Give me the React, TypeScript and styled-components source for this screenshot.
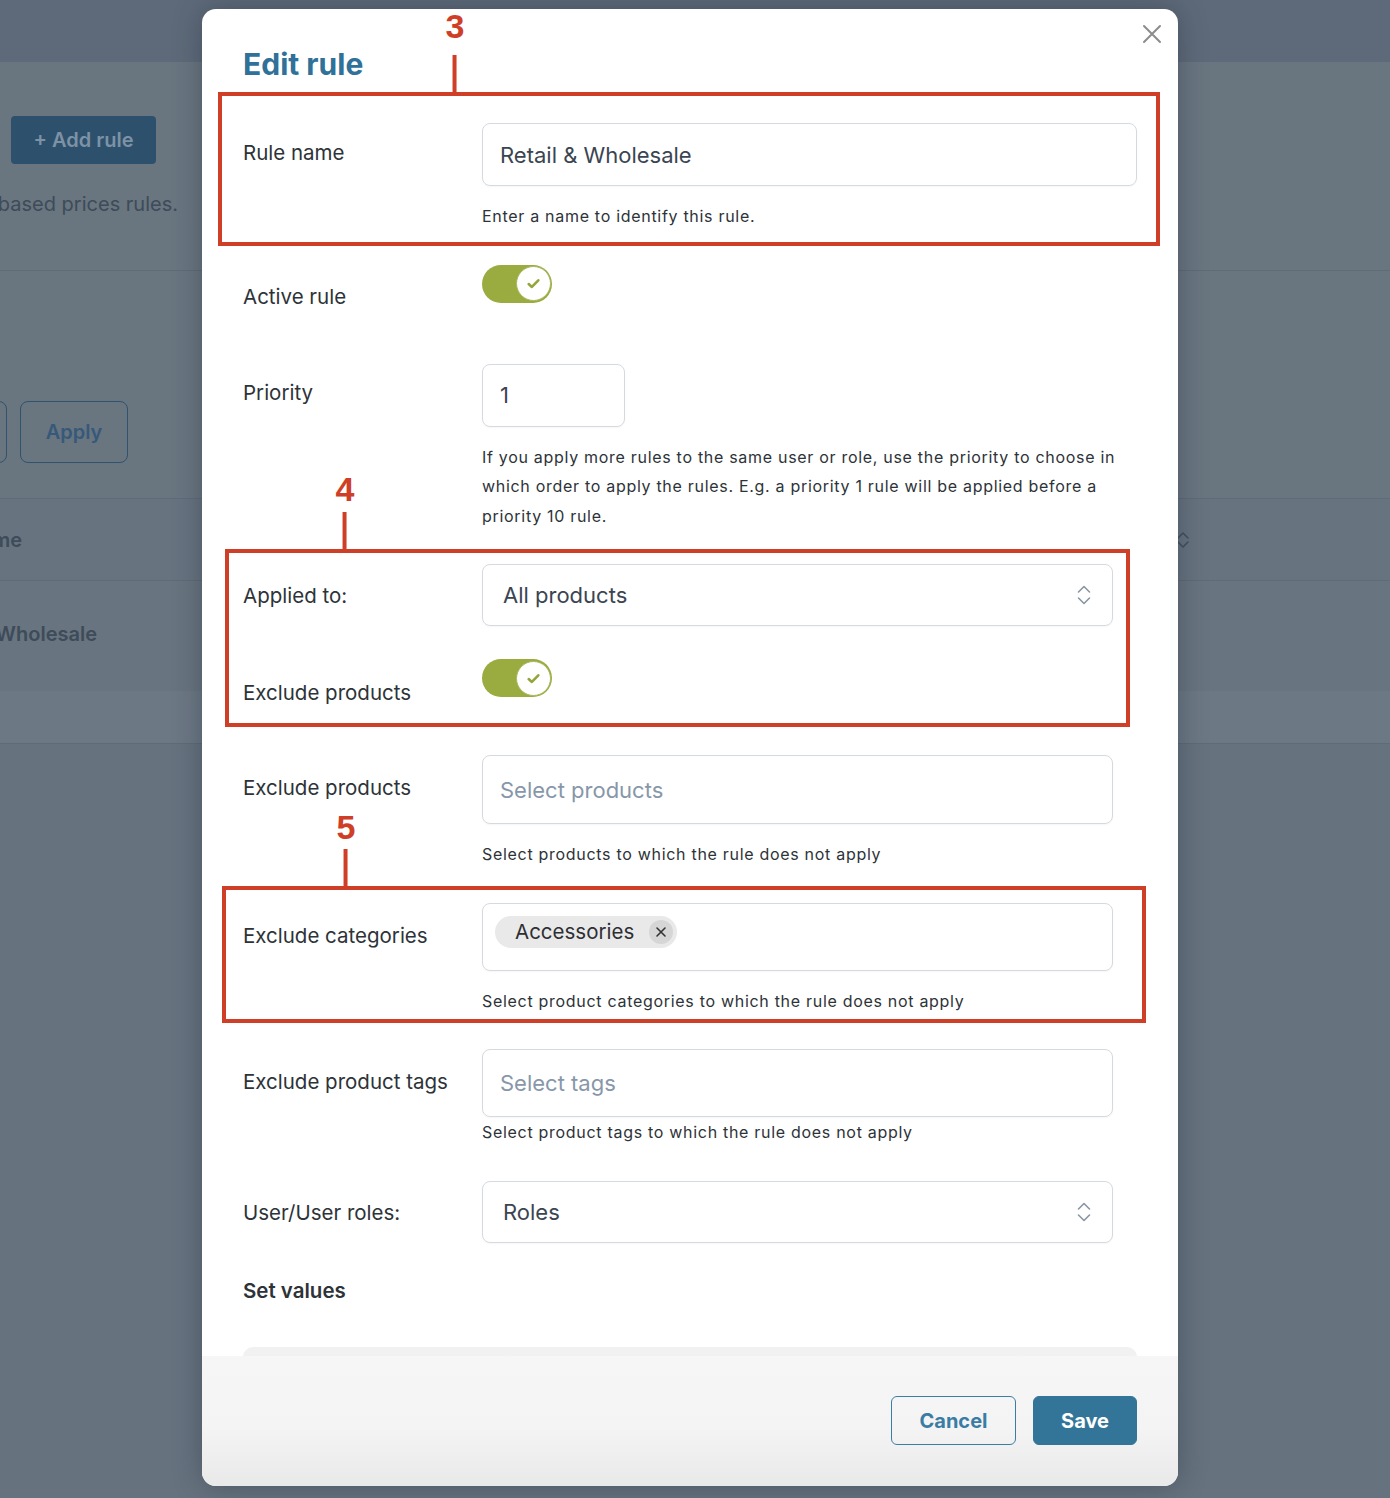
import React from "react"
import styled, { createGlobalStyle } from "styled-components"

const GlobalStyle = createGlobalStyle`
  html, body {
    margin: 0;
    padding: 0;
  }
  body {
    font-family: Inter, "Noto Sans", sans-serif;
    background: #66727e;
  }
  * {
    box-sizing: border-box;
  }
`

const Page = styled.div`
  position: relative;
  width: 1390px;
  height: 1498px;
  overflow: hidden;
  display: flex;
  flex-direction: column;
  background: #66727e;
  color: #3d4a58;
`

/* ---------- dimmed page behind the dialog ---------- */

const TopBar = styled.div`
  height: 62px;
  background: #5e6a79;
`

const Intro = styled.section`
  height: 209px;
  background: #69757f;
  border-bottom: 1px solid #5f6b78;
  padding: 54px 0 0 11px;
  display: flex;
  flex-direction: column;
`

const GhostPrimary = styled.div`
  width: 145px;
  height: 48px;
  border-radius: 4px;
  background: #2d516c;
  color: #7d92a5;
  font-size: 20px;
  font-weight: 600;
  display: flex;
  align-items: center;
  justify-content: center;
`

const Clip = styled.div<{ $w: number; $bold?: boolean }>`
  width: ${(p) => p.$w}px;
  overflow: hidden;
  display: flex;
  justify-content: flex-end;
  white-space: nowrap;
  font-size: 20px;
  font-weight: ${(p) => (p.$bold ? 600 : 400)};
  color: #3e4b59;
`

const Filters = styled.section`
  height: 228px;
  background: #69757f;
  border-bottom: 1px solid #5f6b78;
  display: flex;
  align-items: flex-start;
  gap: 13px;
  padding-top: 130px;
`

const GhostButton = styled.div<{ $w: number; $pull?: number }>`
  width: ${(p) => p.$w}px;
  margin-left: ${(p) => p.$pull || 0}px;
  height: 62px;
  border: 1.5px solid #30536f;
  border-radius: 8px;
  color: #36597a;
  font-size: 20px;
  font-weight: 600;
  display: flex;
  align-items: center;
  justify-content: center;
`

const TableHead = styled.div`
  height: 82px;
  background: #67737f;
  border-bottom: 1px solid #5f6b78;
  display: flex;
  align-items: center;
`

const SortIcon = styled.svg`
  margin-left: auto;
  margin-right: 200px;
`

const TableRow = styled.div`
  height: 110px;
  background: #68747f;
  display: flex;
  align-items: center;
  padding-bottom: 4px;
`

const TableFoot = styled.div`
  height: 53px;
  background: #6c7884;
  border-bottom: 1px solid #5f6b78;
`

/* ---------- dialog ---------- */

const Dialog = styled.div`
  position: absolute;
  left: 202px;
  top: 9px;
  width: 976px;
  height: 1477px;
  background: #fff;
  border-radius: 14px;
  overflow: hidden;
  display: flex;
  flex-direction: column;
  box-shadow: 0 0 28px rgba(40, 52, 66, 0.45);
`

const Body = styled.div`
  position: relative;
  height: 1347px;
  overflow: hidden;
  padding: 37px 41px 0 41px;
`

const Title = styled.h2`
  margin: 0 0 41px 0;
  font-size: 30px;
  line-height: 36px;
  font-weight: 700;
  color: #2f7198;
`

const Close = styled.svg`
  position: absolute;
  top: 15px;
  right: 16px;
`

const Form = styled.div`
  display: flex;
  flex-direction: column;
  gap: 33px;
`

const Row = styled.div<{ $minH?: number }>`
  display: grid;
  grid-template-columns: 239px 1fr;
  min-height: ${(p) => p.$minH || 0}px;
`

const Label = styled.div<{ $pad: number }>`
  padding-top: ${(p) => p.$pad}px;
  font-size: 20.5px;
  line-height: 24px;
  color: #2d3338;
`

const Control = styled.div`
  display: flex;
  flex-direction: column;
`

const Field = styled.div<{ $w?: number; $h: number; $pl?: number; $muted?: boolean }>`
  width: ${(p) => (p.$w ? `${p.$w}px` : "100%")};
  height: ${(p) => p.$h}px;
  border: 1px solid #d4dae0;
  border-radius: 8px;
  box-shadow: 0 1px 2px rgba(0, 0, 0, 0.04);
  padding: 0 21px 0 ${(p) => p.$pl ?? 17}px;
  display: flex;
  align-items: center;
  font-size: 22px;
  color: ${(p) => (p.$muted ? "#8797a9" : "#3b4552")};
`

const Chevrons = styled.svg`
  margin-left: auto;
`

const Helper = styled.div<{ $mt?: number }>`
  max-width: 640px;
  margin-top: ${(p) => p.$mt ?? 16}px;
  font-size: 16px;
  line-height: 29.5px;
  letter-spacing: 0.7px;
  color: #2d3338;
`

const Toggle = styled.div`
  width: 70px;
  height: 38px;
  border-radius: 19px;
  background: #9aab3f;
  display: flex;
  align-items: center;
  justify-content: flex-end;
  padding-right: 1px;
`

const Knob = styled.div`
  width: 35px;
  height: 35px;
  border-radius: 50%;
  background: #fff;
  border: 1px solid #a9b85c;
  display: flex;
  align-items: center;
  justify-content: center;
`

const Chip = styled.div`
  align-self: flex-start;
  margin: 12px 0 0 -5px;
  height: 32px;
  border-radius: 16px;
  background: #e9e9e9;
  padding: 0 4px 0 20px;
  display: flex;
  align-items: center;
  gap: 15px;
  font-size: 20.5px;
  color: #2d2f33;
`

const ChipClose = styled.div`
  width: 24px;
  height: 24px;
  border-radius: 50%;
  background: #d6d6d6;
  display: flex;
  align-items: center;
  justify-content: center;
`

const Section = styled.div`
  margin-top: 36px;
  font-size: 20.5px;
  line-height: 24px;
  font-weight: 600;
  color: #2d3338;
`

const Card = styled.div`
  margin-top: 44px;
  height: 200px;
  border-radius: 10px;
  background: #f1f1f1;
`

const Footer = styled.div`
  flex: 1;
  display: flex;
  justify-content: flex-end;
  align-items: flex-start;
  gap: 17px;
  padding: 40px 41px 0 0;
  background: linear-gradient(#f6f6f6 0%, #f4f4f4 55%, #e9e9e9 100%);
`

const Button = styled.button<{ $primary?: boolean; $w: number }>`
  width: ${(p) => p.$w}px;
  height: 49px;
  border-radius: 6px;
  font-family: inherit;
  font-size: 20px;
  font-weight: 700;
  border: 1px solid ${(p) => (p.$primary ? "#337599" : "#3b7ea4")};
  background: ${(p) => (p.$primary ? "#337599" : "transparent")};
  color: ${(p) => (p.$primary ? "#fff" : "#3b7ca5")};
`

/* ---------- red annotations ---------- */

const RED = "#cf3f27"

const Box = styled.div<{ $x: number; $y: number; $w: number; $h: number }>`
  position: absolute;
  left: ${(p) => p.$x}px;
  top: ${(p) => p.$y}px;
  width: ${(p) => p.$w}px;
  height: ${(p) => p.$h}px;
  border: 4px solid ${RED};
  pointer-events: none;
`

const Marker = styled.div<{ $x: number; $y: number; $gap: number }>`
  position: absolute;
  left: ${(p) => p.$x}px;
  top: ${(p) => p.$y}px;
  transform: translate(-50%, -100%);
  display: flex;
  flex-direction: column;
  align-items: center;
  gap: ${(p) => p.$gap}px;
`

const MarkerNum = styled.div`
  font-family: "Liberation Sans", Arial, sans-serif;
  font-size: 34px;
  line-height: 28px;
  font-weight: 700;
  color: ${RED};
`

const Stem = styled.div`
  width: 4px;
  height: 37px;
  background: ${RED};
`

function UpDown() {
  return (
    <Chevrons width="14" height="24" viewBox="0 0 14 24" fill="none" stroke="#8996a4" strokeWidth="1.6" strokeLinecap="round" strokeLinejoin="round">
      <path d="M1.5 9 L7 3.5 L12.5 9" />
      <path d="M1.5 15 L7 20.5 L12.5 15" />
    </Chevrons>
  )
}

function Switch() {
  return (
    <Toggle>
      <Knob>
        <svg width="15" height="15" viewBox="0 0 14 14" fill="none" stroke="#94a63a" strokeWidth="2.4" strokeLinecap="round" strokeLinejoin="round">
          <path d="M2.5 7.5 L5.5 10.2 L11.5 4" />
        </svg>
      </Knob>
    </Toggle>
  )
}

export default function App() {
  return (
    <Page>
      <GlobalStyle />
      <TopBar />
      <Intro>
        <GhostPrimary>+ Add rule</GhostPrimary>
        <div style={{ marginLeft: -11, marginTop: 28 }}>
          <Clip $w={178}>Create and manage user role based prices rules.</Clip>
        </div>
      </Intro>
      <Filters>
        <GhostButton $w={120} $pull={-113} />
        <GhostButton $w={108}>Apply</GhostButton>
      </Filters>
      <TableHead>
        <Clip $w={22} $bold>
          Name
        </Clip>
        <SortIcon width="14" height="20" viewBox="0 0 14 20" fill="none" stroke="#434f5c" strokeWidth="1.6" strokeLinecap="round" strokeLinejoin="round">
          <path d="M2 8 L7 3 L12 8" />
          <path d="M2 12 L7 17 L12 12" />
        </SortIcon>
      </TableHead>
      <TableRow>
        <Clip $w={97} $bold>
          Retail &amp; Wholesale
        </Clip>
      </TableRow>
      <TableFoot />

      <Dialog>
        <Body>
          <Close width="20" height="20" viewBox="0 0 20 20" fill="none" stroke="#8c8c8c" strokeWidth="2" strokeLinecap="round">
            <path d="M2 2 L18 18 M18 2 L2 18" />
          </Close>
          <Title>Edit rule</Title>
          <Form>
            <Row>
              <Label $pad={18}>Rule name</Label>
              <Control>
                <Field $h={63}>Retail &amp; Wholesale</Field>
                <Helper>Enter a name to identify this rule.</Helper>
              </Control>
            </Row>
            <Row $minH={66}>
              <Label $pad={20}>Active rule</Label>
              <Control>
                <Switch />
              </Control>
            </Row>
            <Row>
              <Label $pad={17}>Priority</Label>
              <Control>
                <Field $w={143} $h={63}>
                  1
                </Field>
                <Helper>
                  If you apply more rules to the same user or role, use the priority to choose in which order to apply the rules. E.g. a
                  priority 1 rule will be applied before a priority 10 rule.
                </Helper>
              </Control>
            </Row>
            <Row>
              <Label $pad={20}>Applied to:</Label>
              <Control>
                <Field $w={631} $h={62} $pl={20}>
                  All products
                  <UpDown />
                </Field>
              </Control>
            </Row>
            <Row $minH={63}>
              <Label $pad={22}>Exclude products</Label>
              <Control>
                <Switch />
              </Control>
            </Row>
            <Row>
              <Label $pad={21}>Exclude products</Label>
              <Control>
                <Field $w={631} $h={69} $muted>
                  Select products
                </Field>
                <Helper>Select products to which the rule does not apply</Helper>
              </Control>
            </Row>
            <Row>
              <Label $pad={21}>Exclude categories</Label>
              <Control>
                <Field $w={631} $h={68}>
                  <Chip>
                    Accessories
                    <ChipClose>
                      <svg width="12" height="12" viewBox="0 0 12 12" fill="none" stroke="#333" strokeWidth="1.6" strokeLinecap="round">
                        <path d="M2 2 L10 10 M10 2 L2 10" />
                      </svg>
                    </ChipClose>
                  </Chip>
                </Field>
                <Helper>Select product categories to which the rule does not apply</Helper>
              </Control>
            </Row>
            <Row>
              <Label $pad={21}>Exclude product tags</Label>
              <Control>
                <Field $w={631} $h={68} $muted>
                  Select tags
                </Field>
                <Helper $mt={1}>Select product tags to which the rule does not apply</Helper>
              </Control>
            </Row>
            <Row>
              <Label $pad={20}>User/User roles:</Label>
              <Control>
                <Field $w={631} $h={62} $pl={20}>
                  Roles
                  <UpDown />
                </Field>
              </Control>
            </Row>
          </Form>
          <Section>Set values</Section>
          <Card />

          <Box $x={16} $y={83} $w={942} $h={154} />
          <Marker $x={253} $y={83} $gap={15}>
            <MarkerNum>3</MarkerNum>
            <Stem />
          </Marker>
          <Box $x={23} $y={540} $w={905} $h={178} />
          <Marker $x={143} $y={540} $gap={9}>
            <MarkerNum>4</MarkerNum>
            <Stem />
          </Marker>
          <Box $x={20} $y={877} $w={924} $h={137} />
          <Marker $x={144} $y={877} $gap={8}>
            <MarkerNum>5</MarkerNum>
            <Stem />
          </Marker>
        </Body>
        <Footer>
          <Button $w={125}>Cancel</Button>
          <Button $w={104} $primary>
            Save
          </Button>
        </Footer>
      </Dialog>
    </Page>
  )
}
